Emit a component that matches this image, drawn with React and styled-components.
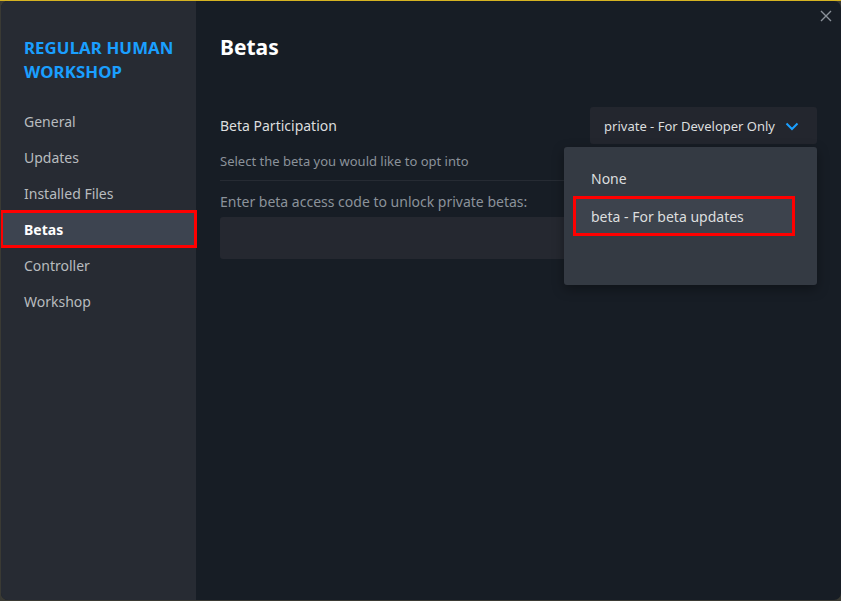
import React from "react";
import styled, { createGlobalStyle } from "styled-components";

const GlobalStyle = createGlobalStyle`
  html, body {
    margin: 0;
    padding: 0;
    width: 841px;
    height: 601px;
    overflow: hidden;
    background: #3a3a34;
  }
  * { box-sizing: border-box; }
`;

const navItems = ["General", "Updates", "Installed Files", "Betas", "Controller", "Workshop"];

export default function App() {
  return (
    <>
      <GlobalStyle />
      <Desktop>
        <Window>
          <Sidebar>
            <GameTitle>REGULAR HUMAN WORKSHOP</GameTitle>
            <Nav>
              {navItems.map((item) => (
                <NavItem key={item} $active={item === "Betas"}>
                  {item}
                </NavItem>
              ))}
            </Nav>
          </Sidebar>
          <Main>
            <CloseButton aria-label="close">
              <svg width="12" height="12" viewBox="0 0 12 12">
                <path d="M1 1L11 11M11 1L1 11" stroke="#8b929a" strokeWidth="1.4" />
              </svg>
            </CloseButton>
            <PageTitle>Betas</PageTitle>
            <Row>
              <RowLabel>Beta Participation</RowLabel>
              <SelectWrap>
                <SelectButton>
                  private - For Developer Only
                  <svg width="14" height="10" viewBox="0 0 14 10">
                    <path d="M1.5 2.5L7 8L12.5 2.5" fill="none" stroke="#1a9fff" strokeWidth="2" />
                  </svg>
                </SelectButton>
                <Menu>
                  <MenuItem>None</MenuItem>
                  <MenuItem $active>beta - For beta updates</MenuItem>
                </Menu>
              </SelectWrap>
            </Row>
            <Hint>Select the beta you would like to opt into</Hint>
            <Divider />
            <FieldLabel>Enter beta access code to unlock private betas:</FieldLabel>
            <CodeInput />
          </Main>
        </Window>
      </Desktop>
    </>
  );
}

const Desktop = styled.div`
  width: 841px;
  height: 601px;
  padding: 1px 0 1px 1px;
  border-top: 1px solid #d6b322;
  background: #3a3a34;
  font-family: "Noto Sans", "Open Sans", sans-serif;
`;

const Window = styled.div`
  display: flex;
  height: 599px;
  margin-top: -1px;
  border-radius: 7px;
  overflow: hidden;
  background: #171d25;
`;

const Sidebar = styled.div`
  width: 195px;
  flex-shrink: 0;
  background: #272b33;
  padding-top: 35px;
`;

const GameTitle = styled.div`
  padding: 0 10px 0 23px;
  color: #1a9fff;
  font-size: 16.8px;
  font-weight: 700;
  line-height: 24px;
  letter-spacing: 0.1px;
`;

const Nav = styled.div`
  display: flex;
  flex-direction: column;
  margin-top: 19px;
`;

const NavItem = styled.div`
  height: 36px;
  display: flex;
  align-items: center;
  padding-left: 23px;
  font-size: 14px;
  color: ${(p) => (p.$active ? "#ffffff" : "#b8bcbf")};
  font-weight: ${(p) => (p.$active ? 700 : 400)};
  background: ${(p) => (p.$active ? "#3d4450" : "transparent")};
  outline: ${(p) => (p.$active ? "3px solid #ff0000" : "none")};
  outline-offset: -2px;
`;

const Main = styled.div`
  position: relative;
  flex: 1;
  padding: 31px 24px 0 24px;
  color: #dcdedf;
`;

const CloseButton = styled.div`
  position: absolute;
  top: 9px;
  right: 9px;
  width: 12px;
  height: 12px;
  display: flex;
`;

const PageTitle = styled.h1`
  margin: 0;
  font-size: 21px;
  font-weight: 700;
  line-height: 30px;
  color: #ffffff;
`;

const Row = styled.div`
  display: flex;
  align-items: center;
  justify-content: space-between;
  margin-top: 45px;
`;

const RowLabel = styled.div`
  font-size: 14px;
  color: #dcdedf;
`;

const SelectWrap = styled.div`
  position: relative;
`;

const SelectButton = styled.div`
  display: flex;
  align-items: center;
  gap: 10px;
  height: 37px;
  padding: 0 18px 0 14px;
  background: #23262e;
  border-radius: 3px;
  font-size: 13px;
  color: #dcdedf;
`;

const Menu = styled.div`
  position: absolute;
  top: 40px;
  right: 0;
  width: 253px;
  height: 138px;
  padding: 12px 10px 0 10px;
  background: #343a43;
  border-radius: 3px;
  box-shadow: 0 4px 12px rgba(0, 0, 0, 0.35);
  z-index: 2;
`;

const MenuItem = styled.div`
  width: 220px;
  height: 38px;
  display: flex;
  align-items: center;
  padding-left: 17px;
  font-size: 14px;
  color: #dcdedf;
  background: ${(p) => (p.$active ? "#3d434d" : "transparent")};
  outline: ${(p) => (p.$active ? "3px solid #ff0000" : "none")};
  outline-offset: -2px;
`;

const Hint = styled.div`
  margin-top: 8px;
  font-size: 13px;
  color: #8b929a;
`;

const Divider = styled.div`
  height: 1px;
  margin-top: 10px;
  background: #262b33;
`;

const FieldLabel = styled.div`
  margin-top: 11px;
  font-size: 14px;
  color: #8b929a;
`;

const CodeInput = styled.div`
  height: 42px;
  margin-top: 6px;
  background: #252830;
  border-radius: 3px;
`;
